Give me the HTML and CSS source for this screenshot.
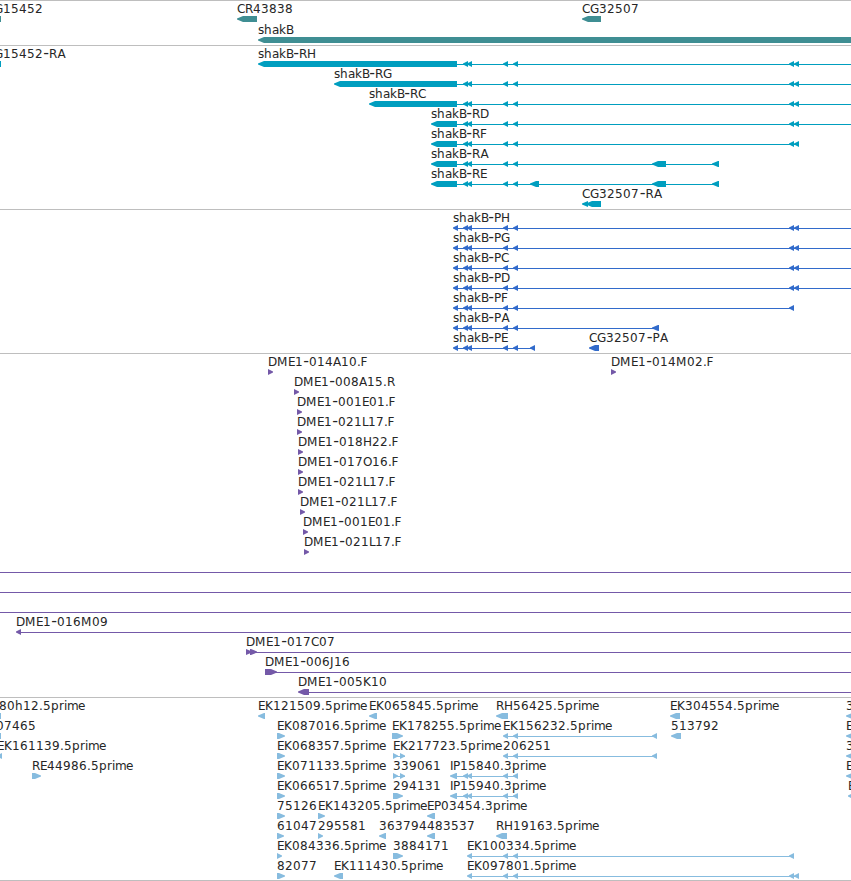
FILE: index.html
```html
<!DOCTYPE html>
<html lang="en">
<head>
<meta charset="utf-8">
<title>shakB region</title>
<link rel="stylesheet" href="styles.css">
</head>
<body>
<main class="browser" id="browser"></main>
<script src="tracks.js"></script>
</body>
</html>
```
FILE: styles.css
```css
body {
  margin: 0;
  background: #fff;
}

.browser {
  width: 851px;
  height: 881px;
  overflow: hidden;
  box-sizing: border-box;
  border-bottom: 1px solid #bebebe;
}

.track {
  border-top: 1px solid #bebebe;
  padding-bottom: 3px;
}

.row {
  display: block;
  width: 851px;
  height: 20px;
  overflow: visible;
}

.label {
  font-family: "DejaVu Sans", "Noto Sans", sans-serif;
  font-size: 12px;
  fill: #262626;
}

.hyphen {
  font-size: 16px;
}

.genes {
  color: #3f8e93;
  padding-bottom: 2px;
}

.genes .row {
  height: 21px;
}

.transcripts { color: #009ebf; }
.proteins { color: #326bcb; }
.bacs { color: #7459a8; }

.ests {
  color: #87bcdf;
  padding-bottom: 2px;
}
```
FILE: tracks.js
```js
const NS = "http://www.w3.org/2000/svg";
const EDGE = 860;

// Horizontal advance of every label character, in whole pixels.
const ADVANCE = {
  A: 8, B: 7, C: 8, D: 9, E: 7, F: 6, G: 9, H: 9, I: 3, J: 4, K: 8, L: 6,
  M: 11, O: 9, P: 7, R: 8, "-": 6, ".": 4,
  s: 6, h: 8, a: 7, k: 7, p: 8, r: 5, i: 3, m: 11, e: 7
};

// Extra space inside certain pairs.
const PAIRS = { RA: 0.5, PA: 0.5, "7-": 0.5, ".F": -0.6 };

// Feature: [label, label x, direction, blocks, line end (optional)]
const mid = [[463, 468], [467, 472], [503, 508], [513, 518]];
const far = [[789, 794], [794, 799]];
const rna = (name, x, rest, end) => [name, x, "L", [[x, 457], ...mid, ...rest], end];
const cds = (name, rest, end) => [name, 453, "L", [[453, 458], ...mid, ...rest], end];
const read = (name, x, w, dir = "R") => [name, x, dir, [[x, x + w]]];

const tracks = [
  { name: "genes", rows: [
    [["G15452", -6, "B", [[-5, 1]]], read("CR43838", 237, 20, "L"), read("CG32507", 582, 19, "L")],
    [["shakB", 258, "L", [[258, EDGE]]]]
  ] },
  { name: "transcripts", rows: [
    [["G15452-RA", -6, "B", [[-5, 1]]], rna("shakB-RH", 258, far, EDGE)],
    [rna("shakB-RG", 334, far, EDGE)],
    [rna("shakB-RC", 369, far, EDGE)],
    [rna("shakB-RD", 431, far, EDGE)],
    [rna("shakB-RF", 431, far)],
    [rna("shakB-RA", 431, [[652, 666], [712, 719]])],
    [rna("shakB-RE", 431, [[530, 539], [652, 666], [712, 719]])],
    [["CG32507-RA", 582, "L", [[582, 588], [586, 601]]]]
  ] },
  { name: "proteins", rows: [
    [cds("shakB-PH", far, EDGE)],
    [cds("shakB-PG", far, EDGE)],
    [cds("shakB-PC", far, EDGE)],
    [cds("shakB-PD", far, EDGE)],
    [cds("shakB-PF", [[789, 794]])],
    [cds("shakB-PA", [[652, 659]])],
    [cds("shakB-PE", [[530, 535]]), read("CG32507-PA", 589, 10, "L")]
  ] },
  { name: "bacs", rows: [
    [read("DME1-014A10.F", 268, 5), read("DME1-014M02.F", 611, 5)],
    [read("DME1-008A15.R", 294, 5)],
    [read("DME1-001E01.F", 297, 5)],
    [read("DME1-021L17.F", 297, 5)],
    [read("DME1-018H22.F", 298, 5)],
    [read("DME1-017O16.F", 298, 5)],
    [read("DME1-021L17.F", 298, 5)],
    [read("DME1-021L17.F", 300, 5)],
    [read("DME1-001E01.F", 303, 5)],
    [read("DME1-021L17.F", 304, 5)],
    [["", 0, "L", [], EDGE]],
    [["", 0, "L", [], EDGE]],
    [["", 0, "L", [], EDGE]],
    [["DME1-016M09", 16, "L", [[16, 21]], EDGE]],
    [["DME1-017C07", 246, "R", [[246, 252], [250, 257]], EDGE]],
    [["DME1-006J16", 265, "R", [[265, 277]], EDGE]],
    [["DME1-005K10", 298, "L", [[298, 309]], EDGE]]
  ] },
  { name: "ests", rows: [
    [["80h12.5prime", -1, "B", [[-5, 1]]], read("EK121509.5prime", 258, 7, "L"), read("EK065845.5prime", 369, 8, "L"), read("RH56425.5prime", 496, 12, "L"), read("EK304554.5prime", 670, 10, "L"), read("3", 846, 12, "L")],
    [["07465", -4, "B", [[-5, 1]]], read("EK087016.5prime", 277, 8), read("EK178255.5prime", 392, 11), ["EK156232.5prime", 503, "L", [[503, 508], [513, 518], [652, 657]]], read("513792", 671, 10, "L"), read("E", 846, 12, "L")],
    [["EK161139.5prime", -3, "L", [[-3, 2]]], read("EK068357.5prime", 277, 8), ["EK217723.5prime", 393, "R", [[393, 398], [400, 405]]], ["206251", 503, "L", [[503, 508], [513, 518], [652, 657]]], read("3", 846, 12, "L")],
    [read("RE44986.5prime", 32, 9), read("EK071133.5prime", 277, 8), ["339061", 393, "R", [[393, 398], [400, 405]]], ["IP15840.3prime", 450, "L", [[450, 457], ...mid]], read("E", 846, 12, "L")],
    [read("EK066517.5prime", 277, 8), read("294131", 393, 10), ["IP15940.3prime", 450, "L", [[450, 457], ...mid]], ["E", 848, "L", [[848, 853]]]],
    [read("75126", 277, 8), read("EK143205.5prime", 318, 7), read("EP03454.3prime", 427, 8, "L")],
    [read("61047", 277, 7), read("295581", 318, 5), read("363794", 379, 7, "L"), read("483537", 427, 8, "L"), read("RH19163.5prime", 496, 11, "L")],
    [read("EK084336.5prime", 277, 5), read("3884171", 393, 10), ["EK100334.5prime", 467, "L", [[467, 472], [503, 508], [513, 518], [789, 794]]]],
    [read("82077", 277, 8), read("EK111430.5prime", 334, 9, "L"), ["EK097801.5prime", 467, "L", [[467, 472], [503, 508], [513, 518], ...far]]]
  ] }
];

function add(parent, tag, attrs) {
  const el = document.createElementNS(NS, tag);
  for (const key in attrs) el.setAttribute(key, attrs[key]);
  parent.appendChild(el);
  return el;
}

function drawLabel(svg, label, x) {
  const xs = [];
  let pen = x;
  for (let i = 0; i < label.length; i++) {
    xs.push(pen);
    pen += (ADVANCE[label[i]] || 8) + (PAIRS[label.slice(i, i + 2)] || 0);
  }
  const text = add(svg, "text", { class: "label", y: 12 });
  let at = 0;
  for (const part of label.split(/(-)/)) {
    const attrs = { x: xs.slice(at, at + part.length).join(" ") };
    if (part === "-") {
      attrs.class = "hyphen";
      attrs.x = xs[at] + 0.3;
    }
    add(text, "tspan", attrs).textContent = part;
    at += part.length;
  }
}

function drawFeature(svg, [label, x, dir, blocks, end]) {
  const from = blocks.length ? blocks[0][0] + 1 : 0;
  const to = end || blocks[blocks.length - 1][1];
  if (end || blocks.length > 1) {
    add(svg, "rect", { x: from, y: 18, width: to - from, height: 1, fill: "currentColor" });
  }
  for (const [a, b] of blocks) {
    const head = Math.min(6, b - a);
    let points = `${a},15 ${b},15 ${b},21 ${a},21`;
    if (dir === "L") points = `${a},17.5 ${a + head},15 ${b},15 ${b},21 ${a + head},21 ${a},18.5`;
    if (dir === "R") points = `${b},17.5 ${b - head},15 ${a},15 ${a},21 ${b - head},21 ${b},18.5`;
    add(svg, "polygon", { points, fill: "currentColor" });
  }
  if (label) drawLabel(svg, label, x);
}

const browser = document.getElementById("browser");
for (const track of tracks) {
  const section = document.createElement("section");
  section.className = "track " + track.name;
  for (const row of track.rows) {
    const svg = add(section, "svg", { class: "row" });
    row.forEach(feature => drawFeature(svg, feature));
  }
  browser.appendChild(section);
}
```
